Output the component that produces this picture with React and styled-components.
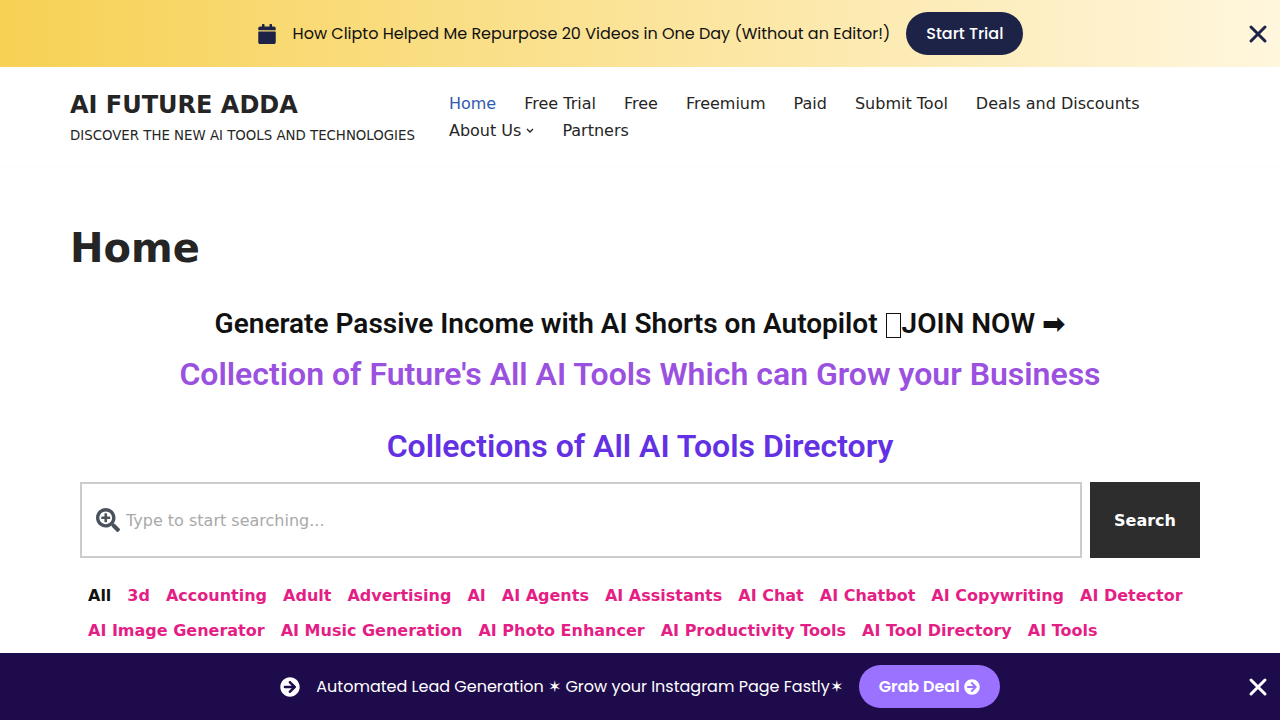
import React, { useState, Fragment } from 'react';
import styled, { createGlobalStyle } from 'styled-components'
import { FaArrowCircleRight, FaCalendar, FaSearchPlus } from 'react-icons/fa';

const menu = ['Home', 'Free Trial', 'Free', 'Freemium', 'Paid', 'Submit Tool', 'Deals and Discounts', 'About Us', 'Partners']

const tags = [
    'All', '3d', 'Accounting', 'Adult', 'Advertising', 'AI', 'AI Agents', 'AI Assistants', 'AI Chat',
    'AI Chatbot', 'AI Copywriting', 'AI Detector', 'AI Image Generator', 'AI Music Generation',
    'AI Photo Enhancer', 'AI Productivity Tools', 'AI Tool Directory', 'AI Tools'
]

const CloseIcon = () => (
    <svg width="20" height="20" viewBox="0 0 20 20" fill="none" stroke="currentColor" strokeWidth="3" strokeLinecap="round">
        <path d="M3 3l14 14M17 3L3 17" />
    </svg>
)

const App = () => {

    const [keyword, setKeyword] = useState('')
    const [showTop, setShowTop] = useState(true)
    const [showBottom, setShowBottom] = useState(true)

    return (
        <Fragment>
            <GlobalStyle />
            {
                showTop ?
                    <TopBar>
                        <FaCalendar size={20} />
                        <BarText $dark>How Clipto Helped Me Repurpose 20 Videos in One Day (Without an Editor!)</BarText>
                        <BarButton href="#trial">Start Trial</BarButton>
                        <CloseButton aria-label="Close" onClick={() => setShowTop(false)}><CloseIcon /></CloseButton>
                    </TopBar> : null
            }
            <Header>
                <HeaderInner>
                    <Brand href="#home">
                        <SiteName>AI FUTURE ADDA</SiteName>
                        <Tagline>DISCOVER THE NEW AI TOOLS AND TECHNOLOGIES</Tagline>
                    </Brand>
                    <Nav>
                        {menu.map(item => (
                            <NavLink key={item} href="#menu" $active={item === 'Home'}>
                                {item}
                                {item === 'About Us' ?
                                    <svg width="8" height="6" viewBox="0 0 8 6" fill="none" stroke="currentColor" strokeWidth="1.4">
                                        <path d="M1 1l3 3 3-3" />
                                    </svg> : null}
                            </NavLink>
                        ))}
                    </Nav>
                </HeaderInner>
            </Header>
            <Main>
                <PageTitle>Home</PageTitle>
                <Content>
                    <Promo>Generate Passive Income with AI Shorts on Autopilot <Glyph />JOIN NOW ➡</Promo>
                    <Heading $color="#9b51e0">Collection of Future's All AI Tools Which can Grow your Business</Heading>
                    <Heading $color="#6331e4" $last>Collections of All AI Tools Directory</Heading>
                    <SearchForm onSubmit={(e) => e.preventDefault()}>
                        <SearchBox>
                            <FaSearchPlus size={24} color="#4a525c" />
                            <SearchInput type="text" aria-label="Search tools" value={keyword}
                                onChange={(e) => setKeyword(e.target.value)} placeholder="Type to start searching..." />
                        </SearchBox>
                        <SearchButton type="submit">Search</SearchButton>
                    </SearchForm>
                    <TagList>
                        {tags.map(tag => (
                            <li key={tag}><TagLink href="#tag" $active={tag === 'All'}>{tag}</TagLink></li>
                        ))}
                    </TagList>
                </Content>
            </Main>
            {
                showBottom ?
                    <BottomBar>
                        <FaArrowCircleRight size={20} />
                        <BarText>Automated Lead Generation ✶ Grow your Instagram Page Fastly✶</BarText>
                        <BarButton href="#deal" $purple>Grab Deal <FaArrowCircleRight size={16} /></BarButton>
                        <CloseButton aria-label="Close" onClick={() => setShowBottom(false)}><CloseIcon /></CloseButton>
                    </BottomBar> : null
            }
        </Fragment>
    );
}

export default App;

const GlobalStyle = createGlobalStyle`
    * {
        box-sizing: border-box;
    }

    body {
        margin: 0;
        padding-bottom: 67px;
        background-color: #fff;
        color: #252525;
        font-family: "DejaVu Sans", sans-serif;
        font-size: 16px;
    }

    a {
        color: inherit;
        text-decoration: none;
    }
`

const Bar = styled.div`
    display: flex;
    align-items: center;
    justify-content: center;
    gap: 16px;
    min-height: 67px;
    padding: 12px 48px;
    font-family: Poppins, Inter, sans-serif;
    text-rendering: optimizeSpeed;
`

const TopBar = styled(Bar)`
    position: relative;
    background: linear-gradient(90deg, #f7d154, #fff6de);
    color: #1c2347;
`

const BottomBar = styled(Bar)`
    position: fixed;
    left: 0;
    right: 0;
    bottom: 0;
    background-color: #1e0b4b;
    color: #fff;
`

const BarText = styled.span`
    color: ${props => props.$dark ? '#111' : '#fff'};
    line-height: 24px;
`

const BarButton = styled.a`
    display: flex;
    align-items: center;
    gap: 4px;
    height: 43px;
    padding: 0 20px;
    border-radius: 22px;
    background-color: ${props => props.$purple ? '#9b72ff' : '#1c2347'};
    color: #fff;
    font-weight: ${props => props.$purple ? 600 : 500};
`

const CloseButton = styled.button`
    position: absolute;
    right: 12px;
    display: flex;
    padding: 0;
    border: 0;
    background: none;
    color: inherit;
    cursor: pointer;
`

const Header = styled.header`
    border-bottom: 1px solid #fcfcfc;
`

const HeaderInner = styled.div`
    display: flex;
    gap: 34px;
    max-width: 1170px;
    margin: 0 auto;
    padding: 23px 15px 16px;
`

const Brand = styled.a`
    flex-shrink: 0;
`

const SiteName = styled.p`
    margin: 0;
    font-size: 24px;
    font-weight: 700;
    line-height: 30px;
`

const Tagline = styled.small`
    display: block;
    margin-top: 2px;
    line-height: 28px;
`

const Nav = styled.nav`
    display: flex;
    flex-wrap: wrap;
    align-content: flex-start;
    column-gap: 28px;
`

const NavLink = styled.a`
    display: flex;
    align-items: center;
    gap: 5px;
    line-height: 27px;
    color: ${props => props.$active ? '#2f5aae' : 'inherit'};
`

const Main = styled.main`
    max-width: 1170px;
    margin: 0 auto;
    padding: 56px 15px 0;
`

const PageTitle = styled.h1`
    margin: 0 0 31px;
    font-size: 40px;
    line-height: 50px;
`

const Content = styled.div`
    padding: 0 10px;
`

const Promo = styled.h2`
    margin: 0 0 10px;
    color: #111;
    font-family: Roboto, "DejaVu Sans", sans-serif;
    font-size: 28px;
    font-weight: 600;
    line-height: 40px;
    text-align: center;
`

// empty box shown in place of an emoji
const Glyph = styled.span`
    display: inline-block;
    width: 15px;
    height: 25px;
    margin: 0 1px;
    border: 1px solid #111;
    vertical-align: -5px;
`

const Heading = styled.h2`
    margin: 0 0 ${props => props.$last ? '16px' : '32px'};
    color: ${props => props.$color};
    font-family: Roboto, sans-serif;
    font-size: 32px;
    font-weight: 600;
    line-height: 40px;
    text-align: center;
`

const SearchForm = styled.form`
    display: flex;
    gap: 8px;
`

const SearchBox = styled.div`
    flex: 1;
    display: flex;
    align-items: center;
    gap: 6px;
    height: 76px;
    padding: 0 14px;
    border: 2px solid #ccc;
`

const SearchInput = styled.input`
    flex: 1;
    min-width: 0;
    padding: 0;
    border: 0;
    outline: 0;
    background: none;
    font: inherit;

    &::placeholder {
        color: #a9a9a9;
    }
`

const SearchButton = styled.button`
    width: 110px;
    border: 0;
    background-color: #2d2d2d;
    color: #fff;
    font: inherit;
    font-weight: 700;
    cursor: pointer;
`

const TagList = styled.ul`
    display: flex;
    flex-wrap: wrap;
    column-gap: 16px;
    margin: 20px 0 0;
    padding: 0 8px;
    list-style: none;
    line-height: 35px;
`

const TagLink = styled.a`
    color: ${props => props.$active ? '#111' : '#e41e85'};
    font-weight: 700;
`
